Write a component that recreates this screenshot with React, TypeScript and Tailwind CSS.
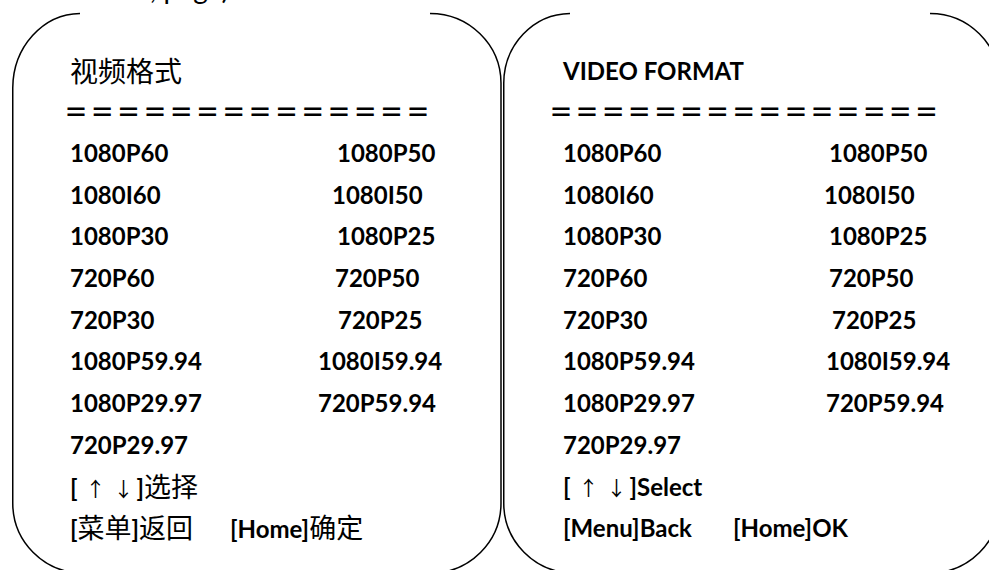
const leftRows = [
  { a: "1080P60", b: "1080P50", w: "w-[267px]" },
  { a: "1080I60", b: "1080I50", w: "w-[262px]" },
  { a: "1080P30", b: "1080P25", w: "w-[267px]" },
  { a: "720P60", b: "720P50", w: "w-[265px]" },
  { a: "720P30", b: "720P25", w: "w-[268px]" },
  { a: "1080P59.94", b: "1080I59.94", w: "w-[248px]" },
  { a: "1080P29.97", b: "720P59.94", w: "w-[248px]" },
];

const rightRows = [
  { a: "1080P60", b: "1080P50", w: "w-[266px]" },
  { a: "1080I60", b: "1080I50", w: "w-[261px]" },
  { a: "1080P30", b: "1080P25", w: "w-[266px]" },
  { a: "720P60", b: "720P50", w: "w-[266px]" },
  { a: "720P30", b: "720P25", w: "w-[269px]" },
  { a: "1080P59.94", b: "1080I59.94", w: "w-[263px]" },
  { a: "1080P29.97", b: "720P59.94", w: "w-[263px]" },
];

function Frame({ paths }: { paths: string[] }) {
  return (
    <svg className="absolute inset-0 h-full w-full overflow-visible" fill="none" stroke="black" strokeWidth="1.5">
      {paths.map((d) => (
        <path key={d} d={d} />
      ))}
    </svg>
  );
}

function Arrows() {
  return (
    <>
      [<span className="ml-[8px] font-['Noto_Sans_CJK_SC'] text-[20px] font-normal">↑</span>
      <span className="ml-[8px] font-['Noto_Sans_CJK_SC'] text-[20px] font-normal">↓</span>
      <span className="ml-[3px]">]</span>
    </>
  );
}

function Rows({ rows }: { rows: { a: string; b: string; w: string }[] }) {
  return (
    <>
      {rows.map((r) => (
        <div key={r.a} className="flex h-[41.7px] leading-[41.7px]">
          <span className={r.w}>{r.a}</span>
          <span>{r.b}</span>
        </div>
      ))}
      <div className="h-[41.7px] leading-[41.7px]">720P29.97</div>
    </>
  );
}

export default function App() {
  return (
    <div className="h-[570px] w-[989px] overflow-hidden bg-white font-[Lato,'Noto_Sans_CJK_SC',sans-serif] text-black">
      <div className="h-[13px] overflow-hidden pl-[150px]">
        <div className="-mt-[27px] text-[28px] leading-[30px]">, page)</div>
      </div>
      <div className="flex pl-[12px] text-[24px] font-bold">
        {/* 中文 */}
        <div className="relative h-[560px] w-[491px] shrink-0">
          <Frame
            paths={[
              "M68 0.5 A68 75 0 0 0 0.75 75 V490 A70 70 0 0 0 70 560",
              "M418 0.5 A71 70 0 0 1 489 70 V490 A70 70 0 0 1 419 560",
            ]}
          />
          <div className="relative pl-[58px] pt-[38px]">
            <div className="h-[40px] text-[28px] font-normal leading-[40px]">视频格式</div>
            <div className="-ml-[6px] mt-[6px] h-[28px] font-['Noto_Sans_CJK_SC'] text-[24px] font-bold leading-[28px] tracking-[2.3px]">
              ＝＝＝＝＝＝＝＝＝＝＝＝＝＝
            </div>
            <div className="mt-[7px]">
              <Rows rows={leftRows} />
              <div className="h-[41.7px] leading-[41.7px]">
                <Arrows />
                <span className="text-[27px] font-normal">选择</span>
              </div>
              <div className="flex h-[41.7px] leading-[41.7px]">
                <span className="w-[160px]">
                  [<span className="text-[27px] font-normal">菜单</span>]<span className="text-[27px] font-normal">返回</span>
                </span>
                <span>
                  [Home]<span className="text-[27px] font-normal">确定</span>
                </span>
              </div>
            </div>
          </div>
        </div>
        {/* English */}
        <div className="relative h-[560px] w-[497px] shrink-0">
          <Frame
            paths={[
              "M67 0.5 A67 70 0 0 0 0.75 70 V490 A70 70 0 0 0 70 560",
              "M427 0.5 A70 70 0 0 1 497 70 V490 A70 70 0 0 1 427 560",
            ]}
          />
          <div className="relative pl-[60px] pt-[38px]">
            <div className="h-[40px] leading-[40px]">VIDEO FORMAT</div>
            <div className="-ml-[14px] mt-[6px] h-[28px] font-['Noto_Sans_CJK_SC'] text-[24px] font-bold leading-[28px] tracking-[2.1px]">
              ＝＝＝＝＝＝＝＝＝＝＝＝＝＝＝
            </div>
            <div className="mt-[7px]">
              <Rows rows={rightRows} />
              <div className="h-[41.7px] leading-[41.7px]">
                <Arrows />
                Select
              </div>
              <div className="flex h-[41.7px] leading-[41.7px]">
                <span className="w-[170px]">[Menu]Back</span>
                <span>[Home]OK</span>
              </div>
            </div>
          </div>
        </div>
      </div>
    </div>
  );
}
